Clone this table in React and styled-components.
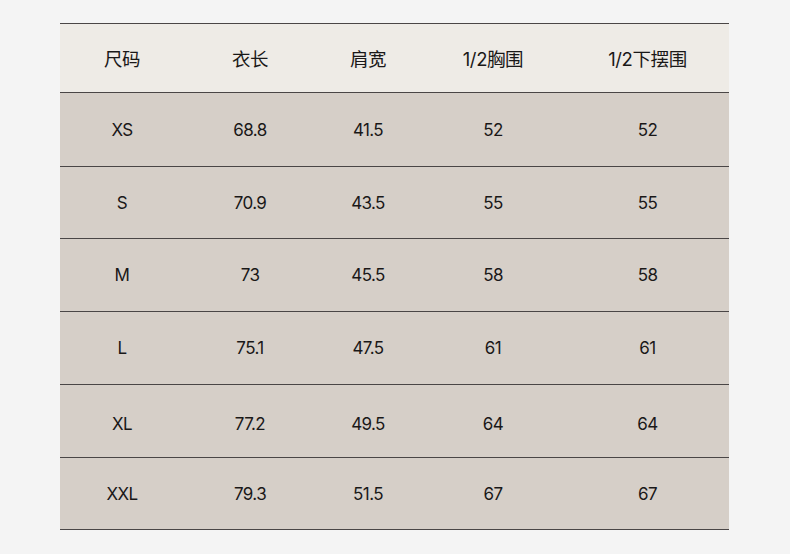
import React from 'react';
import styled, { createGlobalStyle } from 'styled-components';

const GlobalStyle = createGlobalStyle`
  html, body {
    margin: 0;
    padding: 0;
    background: #f4f4f4;
  }
  body {
    font-family: "Inter", "Noto Sans CJK SC", sans-serif;
    color: #1a1818;
  }
`;

const Page = styled.div`
  width: 790px;
  height: 554px;
  padding-top: 23px;
  padding-left: 60px;
  box-sizing: border-box;
`;

const Table = styled.div`
  width: 669px;
  border-top: 1px solid #4a4646;
`;

const Row = styled.div`
  display: grid;
  grid-template-columns: 124px 132px 104px 146px 163px;
  height: ${(p) => p.$h}px;
  background: ${(p) => (p.$head ? '#eeebe6' : '#d6cfc8')};
  border-bottom: 1px solid #4a4646;
  box-sizing: border-box;
`;

const Cell = styled.div`
  display: flex;
  align-items: center;
  justify-content: center;
  font-size: ${(p) => (p.$head ? 18.5 : 17)}px;
  letter-spacing: ${(p) => (p.$head ? '-0.4px' : '-0.6px')};
  padding-top: ${(p) => p.$shift || 0}px;
`;

const headers = ['尺码', '衣长', '肩宽', '1/2胸围', '1/2下摆围'];

const rows = [
  { h: 74, cells: ['XS', '68.8', '41.5', '52', '52'] },
  { h: 72, cells: ['S', '70.9', '43.5', '55', '55'] },
  { h: 73, cells: ['M', '73', '45.5', '58', '58'] },
  { h: 73, cells: ['L', '75.1', '47.5', '61', '61'] },
  { h: 73, cells: ['XL', '77.2', '49.5', '64', '64'], shift: 6 },
  { h: 72, cells: ['XXL', '79.3', '51.5', '67', '67'] },
];

const App = () => (
  <>
    <GlobalStyle />
    <Page>
      <Table>
        <Row $head $h={69}>
          {headers.map((h) => (
            <Cell key={h} $head>
              {h}
            </Cell>
          ))}
        </Row>
        {rows.map((r) => (
          <Row key={r.cells[0]} $h={r.h}>
            {r.cells.map((c, i) => (
              <Cell key={i} $shift={r.shift}>
                {c}
              </Cell>
            ))}
          </Row>
        ))}
      </Table>
    </Page>
  </>
);

export default App;
